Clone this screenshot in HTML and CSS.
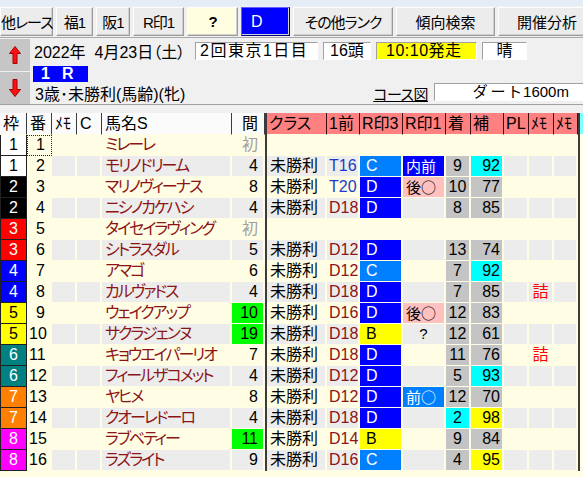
FILE: index.html
```html
<!DOCTYPE html>
<html lang="ja">
<head>
    <meta charset="UTF-8">
    <title>出馬表</title>
    <link rel="stylesheet" href="styles.css">
</head>
<body>

    <div class="topband"></div>

    <div class="toolbar">
        <button class="tb w-other">他レース</button>
        <button class="tb w-fuku">福1</button>
        <button class="tb w-han">阪1</button>
        <button class="tb w-rmark">R印1</button>
        <button class="tb w-q">?</button>
        <button class="tb w-d">D</button>
        <button class="tb w-rank">その他ランク</button>
        <button class="tb w-trend">傾向検索</button>
        <button class="tb w-meet">開催分析</button>
    </div>

    <div class="info">
        <div class="arrows">
            <div class="arrow">
                <svg width="12" height="18" viewBox="0 0 12 18"><polygon points="6,0.5 11.5,7.5 8,7.5 8,17.5 4,17.5 4,7.5 0.5,7.5" fill="#ff1010" stroke="#a00000" stroke-width="1"/></svg>
            </div>
            <div class="arrow">
                <svg width="12" height="18" viewBox="0 0 12 18"><polygon points="6,17.5 11.5,10.5 8,10.5 8,0.5 4,0.5 4,10.5 0.5,10.5" fill="#ff1010" stroke="#a00000" stroke-width="1"/></svg>
            </div>
        </div>
        <div class="info-main">
            <div class="line1">
                <span class="date">2022年&nbsp;&nbsp;4月23日（土）</span>
                <span class="field f-meet">2回東京1日目</span>
                <span class="field f-heads">16頭</span>
                <span class="field f-post">10:10発走</span>
                <span class="field f-weather">晴</span>
            </div>
            <div class="line2">
                <span class="race-no">1R</span>
            </div>
            <div class="line3">
                <span class="cond">3歳･未勝利(馬齢)(牝)</span>
                <a class="course-link">コース図</a>
                <span class="field f-course"><span class="surface">ダート</span>1600m</span>
            </div>
        </div>
    </div>

    <div class="grid-top"></div>
    <div class="grid-wrap">
        <table class="race-table">
            <colgroup>
                <col class="c-waku"><col class="c-num"><col class="c-memo"><col class="c-c">
                <col class="c-name"><col class="c-gap"><col class="c-sep"><col class="c-class">
                <col class="c-prev"><col class="c-r3"><col class="c-r1"><col class="c-fin">
                <col class="c-ho"><col class="c-pl"><col class="c-memo"><col class="c-memo2">
                <col class="c-sep"><col class="c-edge">
            </colgroup>
            <thead>
                <tr>
                    <th class="h">枠</th><th class="h">番</th><th class="h">ﾒﾓ</th><th class="h">C</th>
                    <th class="h">馬名S</th><th class="h right">間</th><th class="sep"></th>
                    <th class="p">クラス</th><th class="p">1前</th><th class="p">R印3</th><th class="p">R印1</th>
                    <th class="p">着</th><th class="p">補</th><th class="p">PL</th><th class="p">ﾒﾓ</th><th class="p">ﾒﾓ</th>
                    <th class="sep"></th><th class="cy"></th>
                </tr>
            </thead>
            <tbody>
                <tr class="odd">
                    <td class="waku w1">1</td><td class="num focus">1</td><td></td><td></td>
                    <td class="name">ミレーレ</td><td class="gap first">初</td><td class="sep"></td>
                    <td></td><td></td><td></td><td></td><td></td><td></td><td></td><td></td><td></td><td class="sep"></td><td class="edge"></td>
                </tr>
                <tr class="even">
                    <td class="waku w1">1</td><td class="num">2</td><td></td><td></td>
                    <td class="name">モリノドリーム</td><td class="gap">4</td><td class="sep"></td>
                    <td class="cls">未勝利</td><td class="prev t">T16</td><td class="rank rank-c">C</td><td class="mark mark-blue">内前</td>
                    <td class="fin">9</td><td class="ho cyan">92</td><td></td><td></td><td></td><td class="sep"></td><td class="edge"></td>
                </tr>
                <tr class="odd">
                    <td class="waku w2">2</td><td class="num">3</td><td></td><td></td>
                    <td class="name">マリノヴィーナス</td><td class="gap">8</td><td class="sep"></td>
                    <td class="cls">未勝利</td><td class="prev t">T20</td><td class="rank rank-d">D</td><td class="mark mark-pink">後○</td>
                    <td class="fin">10</td><td class="ho">77</td><td></td><td></td><td></td><td class="sep"></td><td class="edge"></td>
                </tr>
                <tr class="even">
                    <td class="waku w2">2</td><td class="num">4</td><td></td><td></td>
                    <td class="name">ニシノカケハシ</td><td class="gap">4</td><td class="sep"></td>
                    <td class="cls">未勝利</td><td class="prev d">D18</td><td class="rank rank-d">D</td><td></td>
                    <td class="fin">8</td><td class="ho">85</td><td></td><td></td><td></td><td class="sep"></td><td class="edge"></td>
                </tr>
                <tr class="odd">
                    <td class="waku w3">3</td><td class="num">5</td><td></td><td></td>
                    <td class="name">タイセイラヴィング</td><td class="gap first">初</td><td class="sep"></td>
                    <td></td><td></td><td></td><td></td><td></td><td></td><td></td><td></td><td></td><td class="sep"></td><td class="edge"></td>
                </tr>
                <tr class="even">
                    <td class="waku w3">3</td><td class="num">6</td><td></td><td></td>
                    <td class="name">シトラスダル</td><td class="gap">5</td><td class="sep"></td>
                    <td class="cls">未勝利</td><td class="prev d">D12</td><td class="rank rank-d">D</td><td></td>
                    <td class="fin">13</td><td class="ho">74</td><td></td><td></td><td></td><td class="sep"></td><td class="edge"></td>
                </tr>
                <tr class="odd">
                    <td class="waku w4">4</td><td class="num">7</td><td></td><td></td>
                    <td class="name">アマゴ</td><td class="gap">6</td><td class="sep"></td>
                    <td class="cls">未勝利</td><td class="prev d">D12</td><td class="rank rank-c">C</td><td></td>
                    <td class="fin">7</td><td class="ho cyan">92</td><td></td><td></td><td></td><td class="sep"></td><td class="edge"></td>
                </tr>
                <tr class="even">
                    <td class="waku w4">4</td><td class="num">8</td><td></td><td></td>
                    <td class="name">カルヴァドス</td><td class="gap">4</td><td class="sep"></td>
                    <td class="cls">未勝利</td><td class="prev d">D18</td><td class="rank rank-d">D</td><td></td>
                    <td class="fin">7</td><td class="ho">85</td><td></td><td class="memo-red">詰</td><td></td><td class="sep"></td><td class="edge"></td>
                </tr>
                <tr class="odd">
                    <td class="waku w5">5</td><td class="num">9</td><td></td><td></td>
                    <td class="name">ウェイクアップ</td><td class="gap long">10</td><td class="sep"></td>
                    <td class="cls">未勝利</td><td class="prev d">D16</td><td class="rank rank-d">D</td><td class="mark mark-pink">後○</td>
                    <td class="fin">12</td><td class="ho">83</td><td></td><td></td><td></td><td class="sep"></td><td class="edge"></td>
                </tr>
                <tr class="even">
                    <td class="waku w5">5</td><td class="num">10</td><td></td><td></td>
                    <td class="name">サクラジェンヌ</td><td class="gap long">19</td><td class="sep"></td>
                    <td class="cls">未勝利</td><td class="prev d">D18</td><td class="rank rank-b">B</td><td class="mark mark-q">?</td>
                    <td class="fin">12</td><td class="ho">61</td><td></td><td></td><td></td><td class="sep"></td><td class="edge"></td>
                </tr>
                <tr class="odd">
                    <td class="waku w6">6</td><td class="num">11</td><td></td><td></td>
                    <td class="name">キョウエイパーリオ</td><td class="gap">7</td><td class="sep"></td>
                    <td class="cls">未勝利</td><td class="prev d">D18</td><td class="rank rank-d">D</td><td></td>
                    <td class="fin">11</td><td class="ho">76</td><td></td><td class="memo-red">詰</td><td></td><td class="sep"></td><td class="edge"></td>
                </tr>
                <tr class="even">
                    <td class="waku w6">6</td><td class="num">12</td><td></td><td></td>
                    <td class="name">フィールザコメット</td><td class="gap">4</td><td class="sep"></td>
                    <td class="cls">未勝利</td><td class="prev d">D12</td><td class="rank rank-d">D</td><td></td>
                    <td class="fin">5</td><td class="ho cyan">93</td><td></td><td></td><td></td><td class="sep"></td><td class="edge"></td>
                </tr>
                <tr class="odd">
                    <td class="waku w7">7</td><td class="num">13</td><td></td><td></td>
                    <td class="name">ヤヒメ</td><td class="gap">8</td><td class="sep"></td>
                    <td class="cls">未勝利</td><td class="prev d">D12</td><td class="rank rank-d">D</td><td class="mark mark-sky">前○</td>
                    <td class="fin">12</td><td class="ho">70</td><td></td><td></td><td></td><td class="sep"></td><td class="edge"></td>
                </tr>
                <tr class="even">
                    <td class="waku w7">7</td><td class="num">14</td><td></td><td></td>
                    <td class="name">クオーレドーロ</td><td class="gap">4</td><td class="sep"></td>
                    <td class="cls">未勝利</td><td class="prev d">D18</td><td class="rank rank-d">D</td><td></td>
                    <td class="fin cyan">2</td><td class="ho yellow">98</td><td></td><td></td><td></td><td class="sep"></td><td class="edge"></td>
                </tr>
                <tr class="odd">
                    <td class="waku w8">8</td><td class="num">15</td><td></td><td></td>
                    <td class="name">ラブベティー</td><td class="gap long">11</td><td class="sep"></td>
                    <td class="cls">未勝利</td><td class="prev d">D14</td><td class="rank rank-b">B</td><td></td>
                    <td class="fin">9</td><td class="ho">84</td><td></td><td></td><td></td><td class="sep"></td><td class="edge"></td>
                </tr>
                <tr class="even">
                    <td class="waku w8">8</td><td class="num">16</td><td></td><td></td>
                    <td class="name">ラズライト</td><td class="gap">9</td><td class="sep"></td>
                    <td class="cls">未勝利</td><td class="prev d">D16</td><td class="rank rank-c">C</td><td></td>
                    <td class="fin">4</td><td class="ho yellow">95</td><td></td><td></td><td></td><td class="sep"></td><td class="edge"></td>
                </tr>
            </tbody>
        </table>
    </div>

</body>
</html>
```

FILE: styles.css
```css
html, body {
    margin: 0;
    overflow: hidden;
}
body {
    width: 583px;
    height: 477px;
    background-color: #f0f0f0;
    font-family: "Liberation Sans", "Noto Sans CJK JP", sans-serif;
    font-feature-settings: "palt";
    font-size: 16px;
    color: #000;
}

/* top strip + buttons */
.topband {
    height: 6px;
    background-color: #e4ecf6;
}
.toolbar {
    display: flex;
    gap: 3px;
    padding: 1px 0;
    border-bottom: 1px solid #a8a8a8;
    white-space: nowrap;
}
.tb {
    flex: none;
    height: 29px;
    padding: 0;
    font: inherit;
    font-size: 15px;
    letter-spacing: -1px;
    font-feature-settings: "palt";
    background-color: #ececec;
    border: 1px solid;
    border-color: #fdfdfd #9a9a9a #9a9a9a #fdfdfd;
    box-shadow: inset -1px -1px 0 #d0d0d0;
    color: #000;
}
.w-other { width: 53px; }
.w-fuku { width: 37px; }
.w-han { width: 34px; }
.w-rmark { width: 51px; }
.w-q { width: 51px; background-color: #fffde0; font-weight: bold; }
.w-d { width: 49px; background-color: #0000ff; color: #fff; text-align: left; padding-left: 9px; font-size: 16px; border-color: #6060ff #000080 #000080 #6060ff; }
.w-rank { width: 100px; }
.w-trend { width: 99px; letter-spacing: 0; }
.w-meet { width: 98px; letter-spacing: 0; }

/* race info */
.info {
    display: flex;
    height: 66px;
}
.arrows {
    width: 30px;
    display: flex;
    flex-direction: column;
    gap: 1px;
    padding-top: 1px;
}
.arrow {
    height: 32px;
    background-color: #c6c6c6;
    display: flex;
    align-items: center;
    justify-content: center;
}
.info-main {
    flex: 1;
    padding-left: 3px;
    white-space: nowrap;
}
.line1 {
    display: flex;
    align-items: center;
    margin-top: 4px;
    height: 18px;
}
.date {
    width: 161px;
    padding-left: 1px;
}
.field {
    display: inline-block;
    box-sizing: border-box;
    height: 18px;
    line-height: 16px;
    background-color: #fff;
    border: 1px solid;
    border-color: #a0a0a0 #fff #fff #a0a0a0;
    margin-right: 5px;
}
.f-meet { width: 123px; padding-left: 4px; letter-spacing: 1.5px; }
.f-heads { width: 48px; padding-left: 6px; }
.f-post { width: 101px; padding-left: 9px; background-color: #ffff00; letter-spacing: 0.5px; }
.f-weather { width: 45px; text-align: center; }

.line2 {
    margin-top: 5px;
    height: 16px;
}
.race-no {
    display: inline-block;
    width: 55px;
    height: 16px;
    line-height: 16px;
    box-sizing: border-box;
    padding-left: 8px;
    background-color: #0000ff;
    color: #fff;
    font-weight: bold;
    letter-spacing: 12px;
}
.line3 {
    display: flex;
    align-items: center;
    margin-top: 2px;
    height: 18px;
}
.cond {
    padding-left: 2px;
    padding-top: 2px;
}
.course-link {
    margin-left: auto;
    text-decoration: underline;
    font-size: 15px;
    letter-spacing: -0.5px;
    padding-top: 3px;
    margin-right: 6px;
}
.f-course {
    width: 152px;
    margin-right: -3px;
    padding-left: 38px;
    font-size: 15px;
}
.surface { letter-spacing: 4px; margin-right: -2px; }

/* entry table */
.grid-top {
    height: 8px;
    border-top: 1px solid #a0a0a0;
}
.grid-wrap {
    background-color: #fffde4;
    height: 369px;
    overflow: hidden;
}
.race-table {
    border-collapse: separate;
    border-spacing: 0;
    table-layout: fixed;
    width: 590px;
}
.c-waku { width: 27px; }
.c-num { width: 25px; }
.c-memo { width: 25px; }
.c-c { width: 25px; }
.c-name { width: 130px; }
.c-gap { width: 33px; }
.c-sep { width: 2px; }
.c-class { width: 60px; }
.c-prev { width: 33px; }
.c-r3 { width: 43px; }
.c-r1 { width: 43px; }
.c-fin { width: 25px; }
.c-ho { width: 33px; }
.c-pl { width: 25px; }
.c-memo2 { width: 24px; }
.c-edge { width: 10px; }

.race-table th,
.race-table td {
    padding: 0 2px;
    height: 20px;
    line-height: 20px;
    font-weight: normal;
    text-align: left;
    white-space: nowrap;
    overflow: hidden;
    border-right: 2px solid #fffde4;
    border-bottom: 1px solid #fffde4;
}
.race-table th {
    height: 21px;
    line-height: 21px;
}
.race-table th.h {
    background-color: #fbfbfb;
    border-right: 1px solid #3c3c3c;
    padding-left: 3px;
}
.race-table th.p {
    background-color: #ff8080;
    border-right: 1px solid #3c1010;
    padding-left: 2px;
}
.race-table th.right { text-align: right; padding-right: 6px; }
.race-table th.cy { background-color: #80ffff; }
.race-table .sep,
.race-table th.sep {
    background-color: #3c3c3c;
    border: none;
    padding: 0;
}

.even td { background-color: #ececec; }
.race-table td.num,
.race-table td.edge { background-color: transparent; }

.race-table td.waku {
    text-align: center;
    border-left: 1px solid #202020;
    border-right: 1px solid #202020;
    border-bottom: 1px solid #202020;
    padding: 0;
    color: #fff;
}
.race-table td.w1 { background-color: #fff; color: #000; }
.race-table td.w2 { background-color: #000; }
.race-table td.w3 { background-color: #ff0000; }
.race-table td.w4 { background-color: #0000ff; }
.race-table td.w5 { background-color: #ffff00; color: #000; }
.race-table td.w6 { background-color: #008080; }
.race-table td.w7 { background-color: #ff8000; }
.race-table td.w8 { background-color: #ff00ff; }

.race-table td.num { padding-right: 5px; text-align: right; }
.race-table td.focus {
    outline: 1px dotted #800000;
    outline-offset: -1px;
}

.race-table td.name {
    color: #8c1414;
    padding-left: 3px;
    letter-spacing: -2px;
}
.race-table td.gap { text-align: right; padding-right: 5px; }
.race-table td.first { color: #a0a0a0; }
.race-table td.long { background-color: #00ff00; }
.race-table td.cls { padding-left: 3px; }
.race-table td.t { color: #1c3cc8; }
.race-table td.d { color: #8c1414; }

.race-table td.rank { padding-left: 6px; }
.race-table td.rank-c { background-color: #0080ff; color: #fff; }
.race-table td.rank-d { background-color: #0000ff; color: #fff; }
.race-table td.rank-b { background-color: #ffff00; color: #000; }

.race-table td.mark {
    padding-left: 3px;
    font-family: "Noto Sans CJK JP", sans-serif;
    font-size: 15px;
    overflow: visible;
}
.race-table td.mark-blue { background-color: #0000ff; color: #fff; }
.race-table td.mark-sky { background-color: #0080ff; color: #fff; }
.race-table td.mark-pink { background-color: #ffc0c0; }
.race-table td.mark-q { text-align: center; padding: 0; font-family: "Liberation Sans", sans-serif; }

.race-table td.fin { background-color: #c4c4c4; text-align: center; padding: 0; }
.race-table td.ho { background-color: #c4c4c4; text-align: right; padding-right: 2px; }
.race-table td.cyan { background-color: #00ffff; }
.race-table td.yellow { background-color: #ffff00; }
.race-table td.memo-red { color: #ff0000; text-align: center; padding: 0; }
```
